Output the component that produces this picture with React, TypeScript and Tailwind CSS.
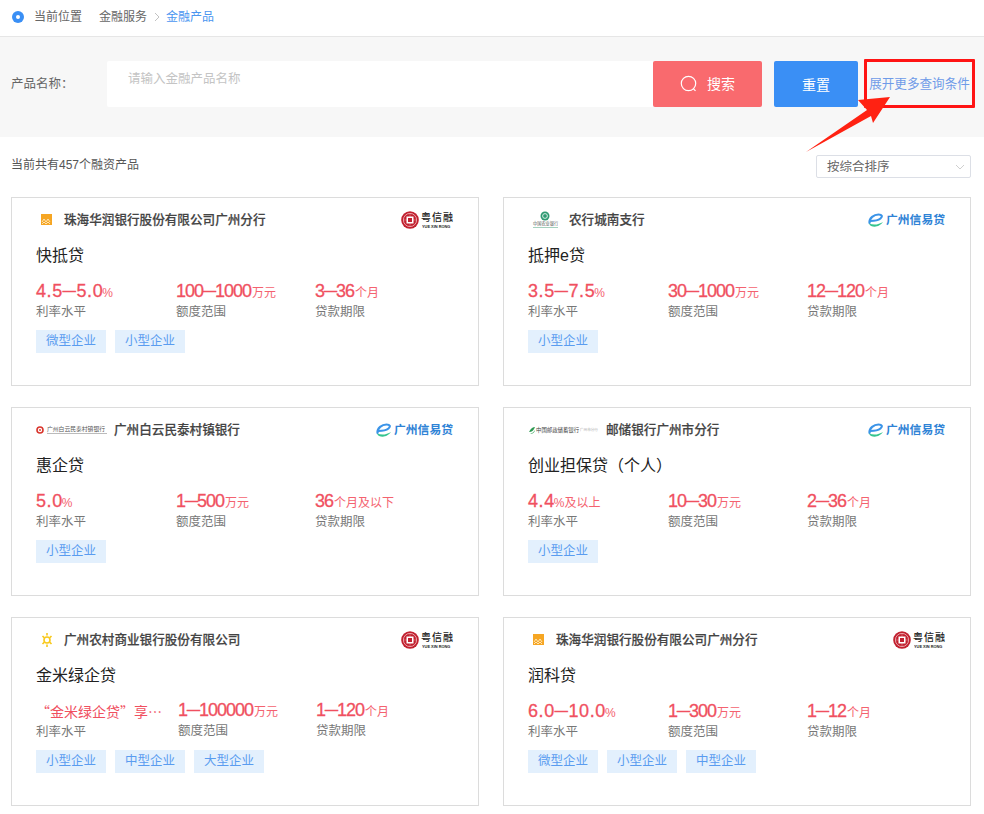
import React from 'react';

type LogoKind = 'huarun' | 'abc' | 'baiyun' | 'psbc' | 'nongshang';

interface Metric {
  value: string;
  unit: string;
  label: string;
}

interface Product {
  id: number;
  logo: LogoKind;
  bank: string;
  brand: 'yxr' | 'xyd';
  name: string;
  rate: string;
  rateUnit: string;
  rateText?: string;
  amount: Metric;
  term: Metric;
  tags: string[];
}

const products: Product[] = [
  {
    id: 1,
    logo: 'huarun',
    bank: '珠海华润银行股份有限公司广州分行',
    brand: 'yxr',
    name: '快抵贷',
    rate: '4.5—5.0',
    rateUnit: '%',
    amount: { value: '100—1000', unit: '万元', label: '额度范围' },
    term: { value: '3—36', unit: '个月', label: '贷款期限' },
    tags: ['微型企业', '小型企业'],
  },
  {
    id: 2,
    logo: 'abc',
    bank: '农行城南支行',
    brand: 'xyd',
    name: '抵押e贷',
    rate: '3.5—7.5',
    rateUnit: '%',
    amount: { value: '30—1000', unit: '万元', label: '额度范围' },
    term: { value: '12—120', unit: '个月', label: '贷款期限' },
    tags: ['小型企业'],
  },
  {
    id: 3,
    logo: 'baiyun',
    bank: '广州白云民泰村镇银行',
    brand: 'xyd',
    name: '惠企贷',
    rate: '5.0',
    rateUnit: '%',
    amount: { value: '1—500', unit: '万元', label: '额度范围' },
    term: { value: '36', unit: '个月及以下', label: '贷款期限' },
    tags: ['小型企业'],
  },
  {
    id: 4,
    logo: 'psbc',
    bank: '邮储银行广州市分行',
    brand: 'xyd',
    name: '创业担保贷（个人）',
    rate: '4.4',
    rateUnit: '%及以上',
    amount: { value: '10—30', unit: '万元', label: '额度范围' },
    term: { value: '2—36', unit: '个月', label: '贷款期限' },
    tags: ['小型企业'],
  },
  {
    id: 5,
    logo: 'nongshang',
    bank: '广州农村商业银行股份有限公司',
    brand: 'yxr',
    name: '金米绿企贷',
    rate: '',
    rateUnit: '',
    rateText: '“金米绿企贷”享…',
    amount: { value: '1—100000', unit: '万元', label: '额度范围' },
    term: { value: '1—120', unit: '个月', label: '贷款期限' },
    tags: ['小型企业', '中型企业', '大型企业'],
  },
  {
    id: 6,
    logo: 'huarun',
    bank: '珠海华润银行股份有限公司广州分行',
    brand: 'yxr',
    name: '润科贷',
    rate: '6.0—10.0',
    rateUnit: '%',
    amount: { value: '1—300', unit: '万元', label: '额度范围' },
    term: { value: '1—12', unit: '个月', label: '贷款期限' },
    tags: ['微型企业', '小型企业', '中型企业'],
  },
];

function BankLogo({ kind }: { kind: LogoKind }) {
  if (kind === 'huarun') {
    return (
      <svg width="28" height="14" viewBox="0 0 28 14" className="shrink-0">
        <rect x="5" y="1" width="11" height="11" fill="#f6a623" />
        <path d="M6 9l2-3 2 3 2-3 2 3M6 11l2-2 2 2 2-2 2 2" fill="none" stroke="#fff3d8" strokeWidth="0.8" />
      </svg>
    );
  }
  if (kind === 'nongshang') {
    return (
      <svg width="28" height="16" viewBox="0 0 28 16" className="shrink-0">
        <circle cx="11" cy="8" r="3" fill="none" stroke="#f8c91c" strokeWidth="1.6" />
        <path
          d="M11 1v2.5M11 12.5V15M6.5 4l1.6 1.6M13.9 10.4l1.6 1.6M6.5 12l1.6-1.6M13.9 5.6l1.6-1.6"
          stroke="#f8c91c"
          strokeWidth="1.6"
        />
      </svg>
    );
  }
  if (kind === 'abc') {
    return (
      <svg width="41" height="18" viewBox="-2 0 41 18" className="shrink-0">
        <circle cx="15" cy="5" r="4.5" fill="#2f9a73" />
        <circle cx="15" cy="5" r="2.4" fill="none" stroke="#fff" strokeWidth="0.8" />
        <text x="3" y="14" fontSize="4.2" fill="#555" fontFamily="'Noto Sans CJK SC', sans-serif">
          中国农业银行
        </text>
        <rect x="3" y="16" width="25" height="0.7" fill="#7dbda3" />
      </svg>
    );
  }
  if (kind === 'baiyun') {
    return (
      <svg width="78" height="12" viewBox="0 0 78 12" className="shrink-0">
        <circle cx="4" cy="6" r="3" fill="none" stroke="#d9352c" strokeWidth="1.6" />
        <circle cx="4" cy="6" r="0.9" fill="#d9352c" />
        <text x="11" y="7" fontSize="5.8" fill="#555" fontFamily="'Noto Sans CJK SC', sans-serif">
          广州白云民泰村镇银行
        </text>
        <rect x="11" y="9" width="60" height="1" fill="#bbb" />
      </svg>
    );
  }
  return (
    <svg width="78" height="12" viewBox="0 0 78 12" className="shrink-0">
      <path d="M1 8c2-4 4-5 6-5-1 3-3 5-6 5z" fill="#2f9a53" />
      <path d="M2 10c2-1 4-2 5-4 0 2-2 4-5 4z" fill="#4fb06f" />
      <text x="8" y="8" fontSize="5.4" fill="#444" fontFamily="'Noto Sans CJK SC', sans-serif">
        中国邮政储蓄银行
      </text>
      <text x="52" y="7" fontSize="3.6" fill="#aaa" fontFamily="'Noto Sans CJK SC', sans-serif">
        广州市分行
      </text>
    </svg>
  );
}

function BrandLogo({ brand }: { brand: Product['brand'] }) {
  if (brand === 'yxr') {
    return (
      <div className="-ml-[2px] flex items-center gap-[3px]">
        <svg width="18" height="18" viewBox="0 0 18 18">
          <circle cx="9" cy="9" r="8.8" fill="#c1202f" />
          <circle cx="9" cy="9" r="6.6" fill="none" stroke="#f3c3c6" strokeWidth="0.8" />
          <path d="M2.5 9h13M9 2.5v13" stroke="#e88a92" strokeWidth="0.6" />
          <rect x="5.5" y="5.500" width="7" height="7" fill="#fff" />
          <rect x="7" y="7" width="4" height="4" fill="#c1202f" />
        </svg>
        <div className="flex w-[31px] flex-col items-center">
          <span className="h-[11px] text-[10px] leading-[11px] font-medium tracking-[1px] whitespace-nowrap text-[#222]">
            粤信融
          </span>
          <svg width="31" height="5" viewBox="0 0 31 5" className="mt-[1px]">
            <text x="0" y="4" fontSize="3.9" fontWeight="700" fill="#222" fontFamily="'Liberation Sans', sans-serif">
              YUE XIN RONG
            </text>
          </svg>
        </div>
      </div>
    );
  }
  return (
    <div className="flex items-center">
      <svg width="18" height="15" viewBox="0 0 18 15">
        <path
          d="M2.500 10C2 5 7 1.500 11.500 1.500c3.500 0 4.500 2 2 4-2.500 2-6.500 2.500-10 2.500"
          fill="none"
          stroke="#3b94e8"
          strokeWidth="2.2"
          strokeLinecap="round"
        />
        <path d="M2 10.500c1 3.500 7 4 10 2 1.500-1 3-2 4-3.500-4 2.500-9 3.500-14 1.500z" fill="#35c48f" />
      </svg>
      <span className="ml-[1px] text-[11.8px] leading-[14px] font-bold whitespace-nowrap text-[#2f83d6]">
        广州信易贷
      </span>
    </div>
  );
}

function ValueText({ value, unit, tracking }: { value: string; unit: string; tracking?: boolean }) {
  const [from, to] = value.split('—');
  return (
    <div className="flex h-[22px] items-baseline whitespace-nowrap text-[#f0505f]">
      <span
        className={`text-[18px] leading-[22px] [-webkit-text-stroke:0.3px] ${
          tracking ? 'tracking-[0.6px]' : 'tracking-[-1px]'
        }`}
      >
        {from}
        {to !== undefined && <span className="align-[2px] text-[13px] [-webkit-text-stroke:0.6px]">—</span>}
        {to}
      </span>
      <span className={`text-[12px] text-[#f4626f] ${tracking ? '-ml-[1px]' : 'ml-[1px]'}`}>{unit}</span>
    </div>
  );
}

function ProductCard({ product }: { product: Product }) {
  const wide = !!product.rateText;
  return (
    <div className="h-[189px] border border-[#dcdcdc] bg-white px-[24px]">
      <div className="mt-[13px] flex h-[18px] items-center justify-between pr-[1px]">
        <div className="flex items-center">
          <BankLogo kind={product.logo} />
          <span className="text-[12.6px] leading-[18px] font-medium whitespace-nowrap text-[#444] [-webkit-text-stroke:0.2px]">
            {product.bank}
          </span>
        </div>
        <BrandLogo brand={product.brand} />
      </div>
      <div className="mt-[17px] text-[16px] leading-[20px] text-[#222]">{product.name}</div>
      <div className="mt-[14px] flex">
        <div className={wide ? 'w-[142px]' : 'w-[140px]'}>
          {product.rateText ? (
            <div className="h-[22px] text-[14px] leading-[22px] whitespace-nowrap text-[#f0505f] font-['Noto_Sans_CJK_SC']">
              {product.rateText}
            </div>
          ) : (
            <ValueText value={product.rate} unit={product.rateUnit} tracking />
          )}
          <div className="mt-[2px] text-[12.5px] leading-[16px] text-[#777]">利率水平</div>
        </div>
        <div className={wide ? '-mt-[1px] w-[138px]' : 'w-[139px]'}>
          <ValueText value={product.amount.value} unit={product.amount.unit} />
          <div className="mt-[2px] text-[12.5px] leading-[16px] text-[#777]">{product.amount.label}</div>
        </div>
        <div className={wide ? '-mt-[1px]' : ''}>
          <ValueText value={product.term.value} unit={product.term.unit} />
          <div className="mt-[2px] text-[12.5px] leading-[16px] text-[#777]">{product.term.label}</div>
        </div>
      </div>
      <div className="mt-[10px] flex gap-[9px]">
        {product.tags.map((tag) => (
          <span
            key={tag}
            className="flex h-[23px] w-[70px] items-center justify-center bg-[#e3f0fd] text-[12.5px] text-[#5a9cf0]"
          >
            {tag}
          </span>
        ))}
      </div>
    </div>
  );
}

export default function App() {
  return (
    <div className="relative h-[814px] w-[984px] overflow-hidden bg-white font-['Liberation_Sans','Noto_Sans_CJK_SC',sans-serif]">
      <div className="flex h-[37px] items-center border-b border-[#e6e6e6] pb-[2px] pl-[12px] text-[12px] text-[#666]">
        <span className="mr-[10px] flex h-[12px] w-[12px] items-center justify-center rounded-full bg-[#3a8ff5]">
          <span className="h-[4px] w-[4px] rounded-full bg-white" />
        </span>
        <span>当前位置</span>
        <span className="ml-[17px]">金融服务</span>
        <svg width="6" height="10" viewBox="0 0 6 10" className="mr-[6px] ml-[7px]">
          <path d="M1 1l4 4-4 4" fill="none" stroke="#bbb" strokeWidth="0.9" />
        </svg>
        <span className="text-[#4a95f0]">金融产品</span>
      </div>

      <div className="flex h-[100px] items-start bg-[#f7f7f7] pt-[24px]">
        <label className="mt-[14px] w-[107px] shrink-0 pl-[11px] text-[12.5px] leading-[18px] text-[#666]">
          产品名称：
        </label>
        <div className="h-[46px] w-[546px] rounded-l-[2px] bg-white pt-[9px] pl-[21px] text-[12.5px] leading-[18px] text-[#c4c4c4]">
          请输入金融产品名称
        </div>
        <button className="flex h-[46px] w-[109px] items-center justify-center gap-[9px] rounded-[2px] bg-[#f96a6e] text-[14px] text-white">
          <svg width="18" height="18" viewBox="0 0 18 18">
            <circle cx="8.500" cy="8.500" r="7.200" fill="none" stroke="#fff" strokeWidth="1.200" />
            <path d="M13.500 13.800l2 2" stroke="#fff" strokeWidth="1.200" />
          </svg>
          搜索
        </button>
        <button className="ml-[12px] h-[46px] w-[84px] rounded-[2px] bg-[#3a8ff5] pt-[2px] text-[14px] text-white">
          重置
        </button>
        <div className="-mt-[2px] ml-[6px] flex h-[49px] w-[111px] items-center justify-center rounded-[1px] border-[3px] border-[#ff1414] pt-[2px] text-[12.6px] whitespace-nowrap text-[#6f9be8]">
          展开更多查询条件
        </div>
      </div>

      <div className="flex h-[60px] items-start justify-between pr-[13px] pl-[11px]">
        <span className="mt-[19px] text-[12px] leading-[18px] text-[#555]">当前共有457个融资产品</span>
        <div className="mt-[18px] flex h-[23px] w-[155px] items-center justify-between rounded-[2px] border border-[#dcdfe6] pt-[1px] pr-[5px] pl-[10px] text-[12.5px] text-[#666]">
          按综合排序
          <svg width="10" height="6" viewBox="0 0 10 6">
            <path d="M1 1l4 4 4-4" fill="none" stroke="#cfcfcf" strokeWidth="1" />
          </svg>
        </div>
      </div>

      <div className="grid grid-cols-[468px_468px] gap-x-[24px] gap-y-[21px] pl-[11px]">
        {products.map((product) => (
          <ProductCard key={product.id} product={product} />
        ))}
      </div>

      <svg width="984" height="814" viewBox="0 0 984 814" className="pointer-events-none absolute top-0 left-0">
        <polygon points="806,152 867,110 858,100 890,97 873,123 871,116" fill="#ff2212" />
      </svg>
    </div>
  );
}
